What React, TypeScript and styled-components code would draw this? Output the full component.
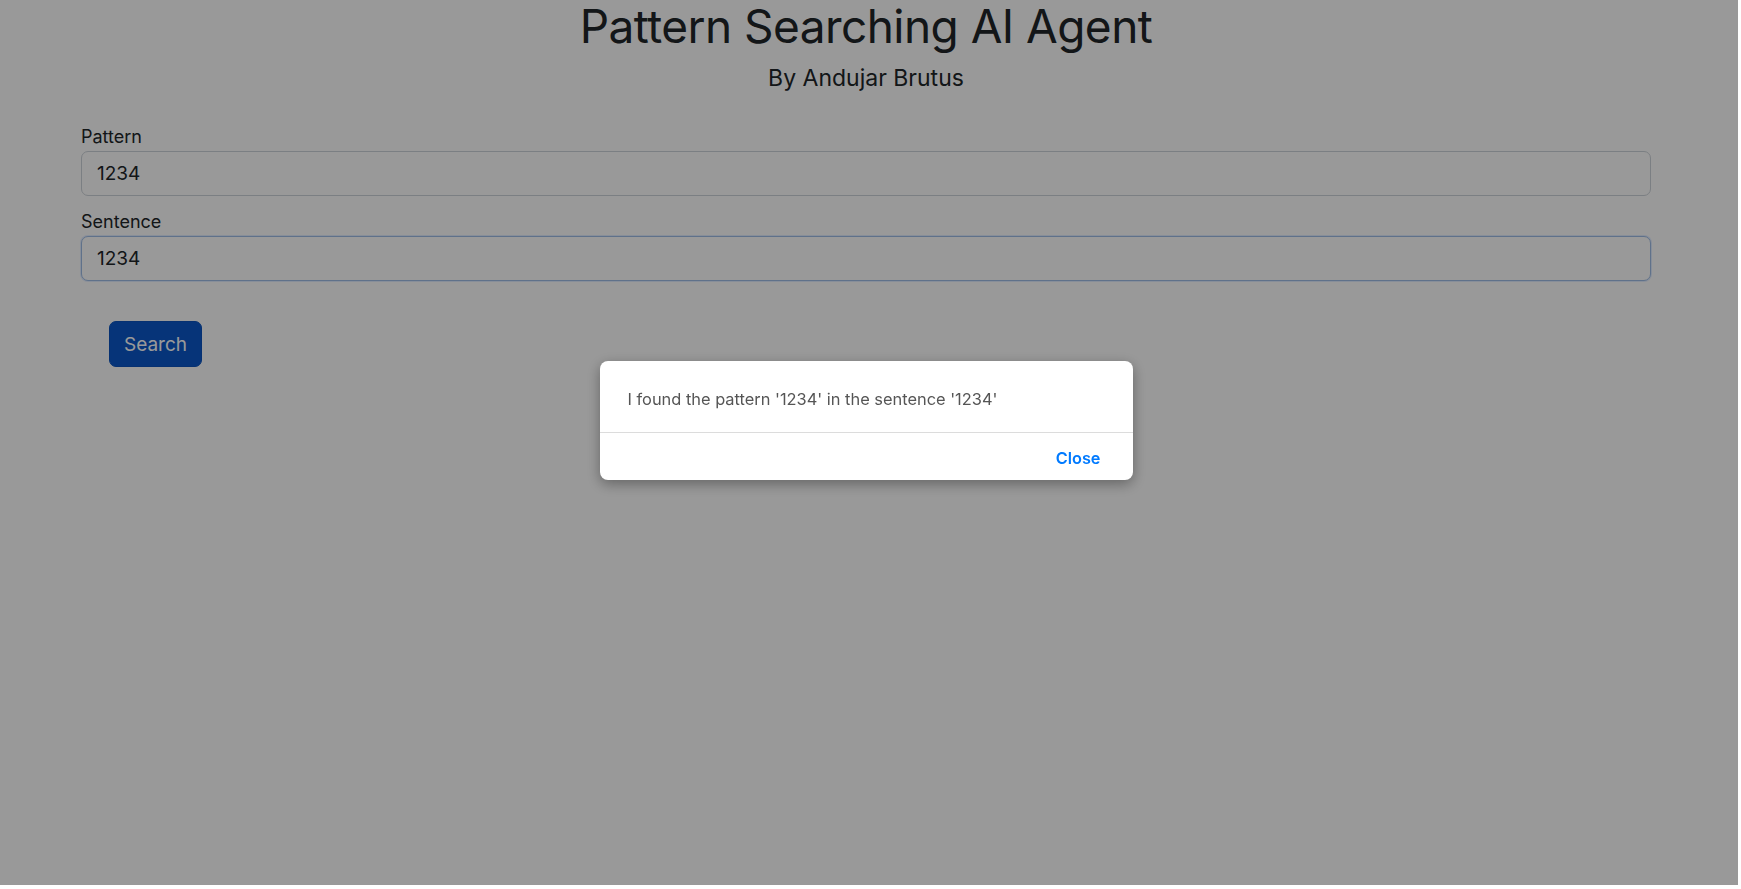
import React from "react";
import styled, { createGlobalStyle } from "styled-components";

const GlobalStyle = createGlobalStyle`
  html, body {
    margin: 0;
    padding: 0;
    background: #ffffff;
  }
  body {
    font-family: Inter, "Noto Sans", "Liberation Sans", sans-serif;
    color: #212529;
  }
  * { box-sizing: border-box; }
`;

const Page = styled.main`
  display: flex;
  flex-direction: column;
  padding: 0 90px 0 81px;
`;

const Header = styled.header`
  display: flex;
  flex-direction: column;
  align-items: center;
`;

const Title = styled.h1`
  margin: -1px 0 0;
  font-size: 46px;
  line-height: 54px;
  font-weight: 400;
  letter-spacing: -0.55px;
  color: #212529;
`;

const Subtitle = styled.h4`
  margin: 11px 0 0;
  font-size: 23px;
  line-height: 28px;
  font-weight: 400;
  color: #212529;
`;

const Form = styled.form`
  display: flex;
  flex-direction: column;
  gap: 12px;
  margin-top: 31px;
`;

const Field = styled.div`
  display: flex;
  flex-direction: column;
  gap: 1px;
`;

const Label = styled.label`
  font-size: 18px;
  line-height: 27px;
  color: #212529;
`;

const Input = styled.input<{ $focused?: boolean }>`
  height: 45px;
  padding: 0 15px;
  font-family: inherit;
  font-size: 19px;
  color: #212529;
  background: #ffffff;
  border: 1px solid ${(p) => (p.$focused ? "#9fbde6" : "#ced4da")};
  border-radius: 7px;
  outline: none;
  box-shadow: ${(p) => (p.$focused ? "0 0 0 1px rgba(13, 110, 253, 0.12)" : "none")};
`;

const Actions = styled.div`
  display: flex;
  padding: 40px 0 0 28px;
`;

const PrimaryButton = styled.button`
  height: 46px;
  padding: 0 14px;
  font-family: inherit;
  font-size: 19px;
  color: #ffffff;
  background: #0a58ca;
  border: 1px solid #0a53be;
  border-radius: 7px;
  cursor: pointer;
`;

const Backdrop = styled.div`
  position: fixed;
  top: 0;
  left: 0;
  width: calc(100% - 3px);
  height: calc(100% - 4px);
  background: rgba(0, 0, 0, 0.4);
  display: flex;
  justify-content: center;
  align-items: flex-start;
  padding: 361px 6px 0 0;
`;

const Dialog = styled.div`
  width: 533px;
  background: #ffffff;
  border-radius: 8px;
  box-shadow: 0 4px 14px rgba(0, 0, 0, 0.35);
  display: flex;
  flex-direction: column;
  overflow: hidden;
`;

const DialogBody = styled.div`
  height: 71px;
  display: flex;
  align-items: center;
  padding: 4px 28px 0;
  font-size: 16.4px;
  color: #555555;
`;

const DialogFooter = styled.div`
  height: 48px;
  border-top: 1px solid #dcdcdc;
  display: flex;
  justify-content: flex-end;
  align-items: center;
  padding: 2px 32px 0 0;
`;

const LinkButton = styled.button`
  padding: 0;
  background: none;
  border: none;
  font-family: inherit;
  font-size: 16.3px;
  font-weight: 600;
  color: #007aff;
  cursor: pointer;
`;

export default function App() {
  const pattern = "1234";
  const sentence = "1234";
  return (
    <>
      <GlobalStyle />
      <Page>
        <Header>
          <Title>Pattern Searching AI Agent</Title>
          <Subtitle>By Andujar Brutus</Subtitle>
        </Header>
        <Form onSubmit={(e) => e.preventDefault()}>
          <Field>
            <Label htmlFor="pattern">Pattern</Label>
            <Input id="pattern" defaultValue={pattern} />
          </Field>
          <Field>
            <Label htmlFor="sentence">Sentence</Label>
            <Input id="sentence" defaultValue={sentence} $focused />
          </Field>
        </Form>
        <Actions>
          <PrimaryButton type="button">Search</PrimaryButton>
        </Actions>
      </Page>
      <Backdrop>
        <Dialog role="dialog">
          <DialogBody>
            I found the pattern '{pattern}' in the sentence '{sentence}'
          </DialogBody>
          <DialogFooter>
            <LinkButton type="button">Close</LinkButton>
          </DialogFooter>
        </Dialog>
      </Backdrop>
    </>
  );
}
